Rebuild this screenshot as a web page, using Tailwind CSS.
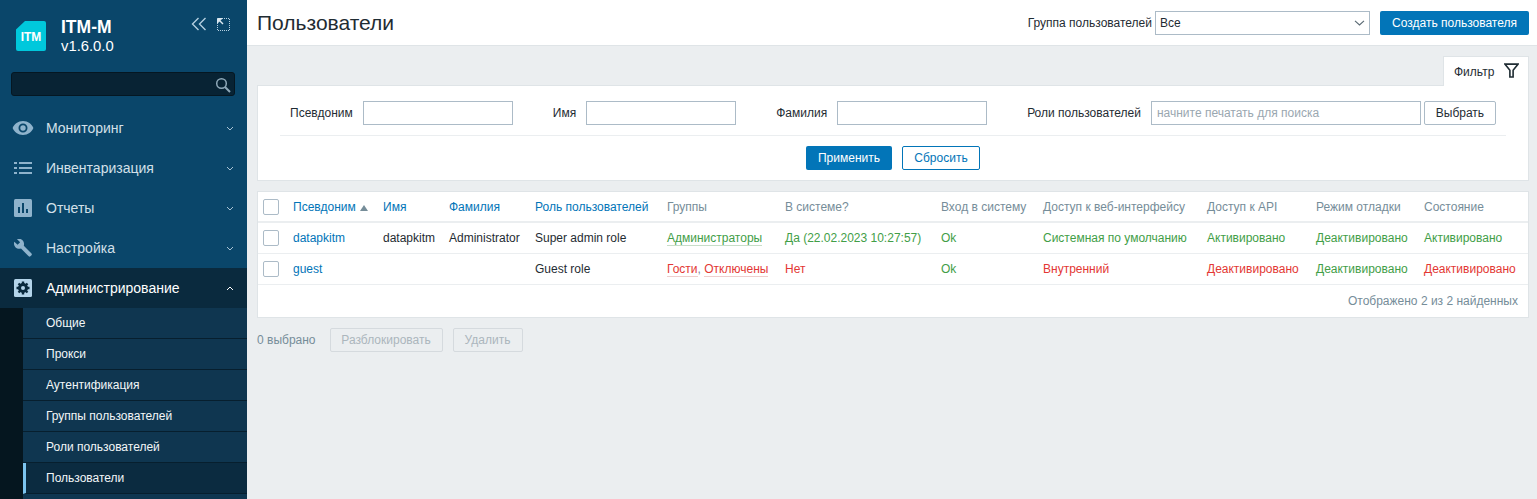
<!DOCTYPE html>
<html lang="ru">
<head>
    <meta charset="UTF-8">
    <title>Пользователи</title>
    <script src="https://cdn.jsdelivr.net/npm/@tailwindcss/browser@4"></script>
</head>
<body class="h-[499px] overflow-hidden bg-[#ebeef0] font-['Liberation_Sans',Arial,sans-serif] text-[12px] text-[#1f2c33]">
<div class="flex h-[499px]">
    <!-- sidebar -->
    <aside class="w-[247px] shrink-0 bg-[#0a466a] overflow-hidden">
        <div class="relative h-[72px]">
            <div class="absolute left-[16px] top-[21px] w-[30px] h-[30px] bg-[#00c8dc] rounded-[2px] [clip-path:polygon(30%_0,100%_0,100%_100%,0_100%,0_28%)] flex items-center justify-center pt-[1px] text-white font-bold text-[12px]">ITM</div>
            <div class="absolute left-[61px] top-[18px] text-white font-bold text-[17.5px] leading-[18px]">ITM-M</div>
            <div class="absolute left-[61px] top-[37px] text-white text-[14.8px] leading-[18px]">v1.6.0.0</div>
            <svg class="absolute left-[191px] top-[17px]" width="16" height="14" viewBox="0 0 16 14" fill="none" stroke="#b4cfe0" stroke-width="1.4"><path d="M7.5 1 1.5 7l6 6M14.5 1l-6 6 6 6"/></svg>
            <svg class="absolute left-[217px] top-[18px]" width="13" height="13" viewBox="0 0 13 13" fill="none"><path d="M5 .5h7.5v12H.5V5" stroke="#b4cfe0" stroke-dasharray="1 1"/><path d="M.5.5h4.5L.5 5z" fill="#dbe8f0" stroke="#dbe8f0"/><path d="M2 2l4 4" stroke="#dbe8f0" stroke-width="1.4"/></svg>
        </div>
        <div class="relative ml-[11px] w-[224px] h-[24px] bg-[#082334] border border-[#051722] rounded-[3px]">
            <svg class="absolute right-[3px] top-[4px]" width="16" height="16" viewBox="0 0 16 16" fill="none" stroke="#8fa9b9"><circle cx="6.5" cy="6.5" r="4.8" stroke-width="1.5"/><path d="M10 10l5 5" stroke-width="2"/></svg>
        </div>
        <nav class="mt-[12px]">
            <div class="flex items-center h-[40px] text-[#d3e0e9] text-[14px]">
                <span class="w-[46px] pl-[12px] shrink-0"><svg width="22" height="16" viewBox="0 0 22 16"><path fill="#8fb3cc" fill-rule="evenodd" d="M11 1C6 1 2.300 4 .6 8c1.700 4 5.400 7 10.400 7s8.700-3 10.400-7C19.700 4 16 1 11 1zm0 11.500a4.500 4.500 0 1 1 0-9 4.500 4.500 0 0 1 0 9zM11 5.300a2.700 2.700 0 1 0 0 5.400 2.700 2.700 0 0 0 0-5.400z"/></svg></span>
                <span class="flex-1">Мониторинг</span>
                <svg class="mr-[13px]" width="8" height="5" viewBox="0 0 8 5" fill="none" stroke="#a9c3d5"><path d="M1 1l3 3 3-3"/></svg>
            </div>
            <div class="flex items-center h-[40px] text-[#d3e0e9] text-[14px]">
                <span class="w-[46px] pl-[14px] shrink-0"><svg width="18" height="14" viewBox="0 0 18 14" fill="#8fb3cc"><path d="M0 1h3v2H0zM5 1h13v2H5zM0 6h3v2H0zM5 6h13v2H5zM0 11h3v2H0zM5 11h13v2H5z"/></svg></span>
                <span class="flex-1">Инвентаризация</span>
                <svg class="mr-[13px]" width="8" height="5" viewBox="0 0 8 5" fill="none" stroke="#a9c3d5"><path d="M1 1l3 3 3-3"/></svg>
            </div>
            <div class="flex items-center h-[40px] text-[#d3e0e9] text-[14px]">
                <span class="w-[46px] pl-[14px] shrink-0"><svg width="18" height="18" viewBox="0 0 18 18"><rect width="18" height="18" rx="1.500" fill="#8fb3cc"/><path fill="#0a466a" d="M4 8h2v6H4zM8 4h2v10H8zM12 10h2v4h-2z"/></svg></span>
                <span class="flex-1">Отчеты</span>
                <svg class="mr-[13px]" width="8" height="5" viewBox="0 0 8 5" fill="none" stroke="#a9c3d5"><path d="M1 1l3 3 3-3"/></svg>
            </div>
            <div class="flex items-center h-[40px] text-[#d3e0e9] text-[14px]">
                <span class="w-[46px] pl-[14px] shrink-0"><svg width="18" height="18" viewBox="0 0 18 18"><path fill="#8fb3cc" d="M17.500 14.500 9.800 6.800C10.400 4.700 9.900 2.500 8.300 1 6.800-.3 4.700-.6 2.900.1l3.200 3.200-2.500 2.500L.3 2.700C-.4 4.500 0 6.700 1.400 8.200c1.500 1.500 3.600 2 5.600 1.400l7.700 7.700c.5.500 1.200.500 1.700 0l1.100-1.100c.5-.500.500-1.200 0-1.700z"/></svg></span>
                <span class="flex-1">Настройка</span>
                <svg class="mr-[13px]" width="8" height="5" viewBox="0 0 8 5" fill="none" stroke="#a9c3d5"><path d="M1 1l3 3 3-3"/></svg>
            </div>
            <div class="flex items-center h-[40px] bg-[#0a2a3e] text-white text-[14px]">
                <span class="w-[46px] pl-[14px] shrink-0"><svg width="18" height="18" viewBox="0 0 18 18"><rect width="18" height="18" rx="1.500" fill="#b4d4ea"/><g fill="#0a2a3e"><circle cx="9" cy="9" r="5"/><path d="M7.800 2.500h2.400v13H7.800zM2.500 7.800h13v2.400h-13z"/><path d="M3.700 5.300l1.600-1.600 9 9-1.600 1.600zM12.700 3.700l1.600 1.600-9 9-1.600-1.600z"/></g><circle cx="9" cy="9" r="2" fill="#b4d4ea"/></svg></span>
                <span class="flex-1">Администрирование</span>
                <svg class="mr-[13px]" width="8" height="5" viewBox="0 0 8 5" fill="none" stroke="#fff"><path d="M1 4l3-3 3 3"/></svg>
            </div>
            <div class="flex bg-[#05161f]">
                <div class="w-[23px] shrink-0"></div>
                <ul class="flex-1 text-[#f2f6f8]">
                    <li class="h-[31px] pl-[23px] pb-[1px] flex items-center bg-[#0f3650] border-b border-[#071f2e]">Общие</li>
                    <li class="h-[31px] pl-[23px] pb-[1px] flex items-center bg-[#0f3650] border-b border-[#071f2e]">Прокси</li>
                    <li class="h-[31px] pl-[23px] pb-[1px] flex items-center bg-[#0f3650] border-b border-[#071f2e]">Аутентификация</li>
                    <li class="h-[31px] pl-[23px] pb-[1px] flex items-center bg-[#0f3650] border-b border-[#071f2e]">Группы пользователей</li>
                    <li class="h-[31px] pl-[23px] pb-[1px] flex items-center bg-[#0f3650] border-b border-[#071f2e]">Роли пользователей</li>
                    <li class="h-[31px] pl-[20px] pb-[1px] flex items-center bg-[#0b2b40] border-b border-[#071f2e] border-l-[3px] border-l-[#7cc4ef]">Пользователи</li>
                    <li class="h-[31px] bg-[#0f3650]"></li>
                </ul>
            </div>
        </nav>
    </aside>

    <div class="flex-1 min-w-0">
        <!-- header -->
        <header class="h-[46px] bg-white border-b border-[#dfe4e7] flex items-center pl-[10px] pr-[8px]">
            <h1 class="text-[21px] flex-1">Пользователи</h1>
            <label class="mr-[3px]">Группа пользователей</label>
            <div class="w-[215px] h-[24px] border border-[#acbbc7] flex items-center justify-between pl-[4px] pr-[4px] mr-[10px]">
                <span>Все</span>
                <svg width="11" height="6" viewBox="0 0 11 6" fill="none" stroke="#5a6a74" stroke-width="1.100"><path d="M1 .8l4.500 4.200L10 .8"/></svg>
            </div>
            <button class="w-[149px] h-[24px] bg-[#0275b8] text-white rounded-[2px]">Создать пользователя</button>
        </header>

        <main class="px-[10px] pr-[8px]">
            <!-- filter -->
            <div class="flex justify-end pt-[10px]">
                <div class="w-[86px] h-[30px] bg-white border-l border-t border-r border-[#dfe4e7] flex items-center pl-[10px] gap-[10px] -mb-px relative">
                    <span>Фильтр</span>
                    <svg class="-mt-[3px]" width="15" height="15" viewBox="0 0 14 14" fill="none" stroke="#1f2c33" stroke-width="1.500"><path d="M.8 1h12.400L8.500 6.800V13L5.500 13V6.800z"/></svg>
                </div>
            </div>
            <section class="bg-white border border-[#dfe4e7] h-[96px] px-[22px]">
                <div class="flex items-center h-[50px] pt-[5px] border-b border-[#ebeef0] pl-[10px]">
                    <span class="mr-[10px]">Псевдоним</span>
                    <div class="w-[150px] h-[24px] border border-[#acbbc7] mr-[40px]"></div>
                    <span class="mr-[10px]">Имя</span>
                    <div class="w-[150px] h-[24px] border border-[#acbbc7] mr-[40px]"></div>
                    <span class="mr-[10px]">Фамилия</span>
                    <div class="w-[150px] h-[24px] border border-[#acbbc7] mr-[40px]"></div>
                    <span class="mr-[10px]">Роли пользователей</span>
                    <div class="w-[270px] h-[24px] border border-[#acbbc7] flex items-center pl-[5px] text-[#9aa7b0] mr-[3px]">начните печатать для поиска</div>
                    <button class="w-[72px] h-[24px] border border-[#acbbc7] rounded-[2px]">Выбрать</button>
                </div>
                <div class="flex justify-center gap-[10px] pt-[10px] pr-[1px]">
                    <button class="w-[86px] h-[24px] bg-[#0275b8] text-white rounded-[2px] pl-[1px]">Применить</button>
                    <button class="w-[78px] h-[24px] border border-[#0275b8] text-[#0275b8] rounded-[2px] pl-[1px]">Сбросить</button>
                </div>
            </section>

            <!-- table -->
            <section class="mt-[10px] bg-white border border-[#dfe4e7]">
                <table class="table-fixed w-full border-collapse">
                    <colgroup>
                        <col class="w-[30px]"><col class="w-[90px]"><col class="w-[66px]"><col class="w-[86px]"><col class="w-[132px]"><col class="w-[118px]"><col class="w-[156px]"><col class="w-[102px]"><col class="w-[164px]"><col class="w-[109px]"><col class="w-[108px]"><col>
                    </colgroup>
                    <thead>
                        <tr class="h-[30px] border-b-2 border-[#ebeef0] text-left text-[#768d99]">
                            <th class="font-normal pl-[5px]"><span class="block w-[16px] h-[16px] border border-[#acbbc7] rounded-[2px]"></span></th>
                            <th class="font-normal text-[#0275b8] pl-[5px] whitespace-nowrap">Псевдоним <span class="inline-block w-0 h-0 ml-[1px] border-x-[4px] border-x-transparent border-b-[6px] border-b-[#768d99]"></span></th>
                            <th class="font-normal text-[#0275b8] pl-[5px]">Имя</th>
                            <th class="font-normal text-[#0275b8] pl-[5px]">Фамилия</th>
                            <th class="font-normal text-[#0275b8] pl-[5px] whitespace-nowrap">Роль пользователей</th>
                            <th class="font-normal pl-[5px]">Группы</th>
                            <th class="font-normal pl-[5px]">В системе?</th>
                            <th class="font-normal pl-[5px] whitespace-nowrap">Вход в систему</th>
                            <th class="font-normal pl-[5px] whitespace-nowrap">Доступ к веб-интерфейсу</th>
                            <th class="font-normal pl-[5px]">Доступ к API</th>
                            <th class="font-normal pl-[5px]">Режим отладки</th>
                            <th class="font-normal pl-[5px]">Состояние</th>
                        </tr>
                    </thead>
                    <tbody>
                        <tr class="h-[31px] border-b border-[#ebeef0]">
                            <td class="pl-[5px]"><span class="block w-[16px] h-[16px] border border-[#acbbc7] rounded-[2px]"></span></td>
                            <td class="pl-[5px] text-[#0275b8]">datapkitm</td>
                            <td class="pl-[5px]">datapkitm</td>
                            <td class="pl-[5px]">Administrator</td>
                            <td class="pl-[5px]">Super admin role</td>
                            <td class="pl-[5px] text-[#429e47] whitespace-nowrap"><span class="border-b border-[#c8ddc9]">Администраторы</span></td>
                            <td class="pl-[5px] text-[#429e47] whitespace-nowrap">Да (22.02.2023 10:27:57)</td>
                            <td class="pl-[5px] text-[#429e47]">Ok</td>
                            <td class="pl-[5px] text-[#429e47] whitespace-nowrap">Системная по умолчанию</td>
                            <td class="pl-[5px] text-[#429e47]">Активировано</td>
                            <td class="pl-[5px] text-[#429e47]">Деактивировано</td>
                            <td class="pl-[5px] text-[#429e47]">Активировано</td>
                        </tr>
                        <tr class="h-[31px] border-b border-[#ebeef0]">
                            <td class="pl-[5px]"><span class="block w-[16px] h-[16px] border border-[#acbbc7] rounded-[2px]"></span></td>
                            <td class="pl-[5px] text-[#0275b8]">guest</td>
                            <td class="pl-[5px]"></td>
                            <td class="pl-[5px]"></td>
                            <td class="pl-[5px]">Guest role</td>
                            <td class="pl-[5px] text-[#e33734] whitespace-nowrap"><span class="border-b border-[#eecfce]">Гости</span><span class="text-[#768d99]">,</span> <span class="border-b border-[#eecfce]">Отключены</span></td>
                            <td class="pl-[5px] text-[#e33734]">Нет</td>
                            <td class="pl-[5px] text-[#429e47]">Ok</td>
                            <td class="pl-[5px] text-[#e33734]">Внутренний</td>
                            <td class="pl-[5px] text-[#e33734]">Деактивировано</td>
                            <td class="pl-[5px] text-[#429e47]">Деактивировано</td>
                            <td class="pl-[5px] text-[#e33734]">Деактивировано</td>
                        </tr>
                    </tbody>
                </table>
                <div class="h-[32px] flex items-center justify-end pr-[10px] text-[#768d99]">Отображено 2 из 2 найденных</div>
            </section>

            <!-- actions -->
            <div class="flex items-center mt-[10px]">
                <span class="text-[#768d99] mr-[14px]">0 выбрано</span>
                <button class="w-[113px] h-[24px] border border-[#d5dade] bg-[#ebeef0] text-[#acb6bd] rounded-[2px] mr-[10px]">Разблокировать</button>
                <button class="w-[70px] h-[24px] border border-[#d5dade] bg-[#ebeef0] text-[#acb6bd] rounded-[2px]">Удалить</button>
            </div>
        </main>
    </div>
</div>
</body>
</html>
